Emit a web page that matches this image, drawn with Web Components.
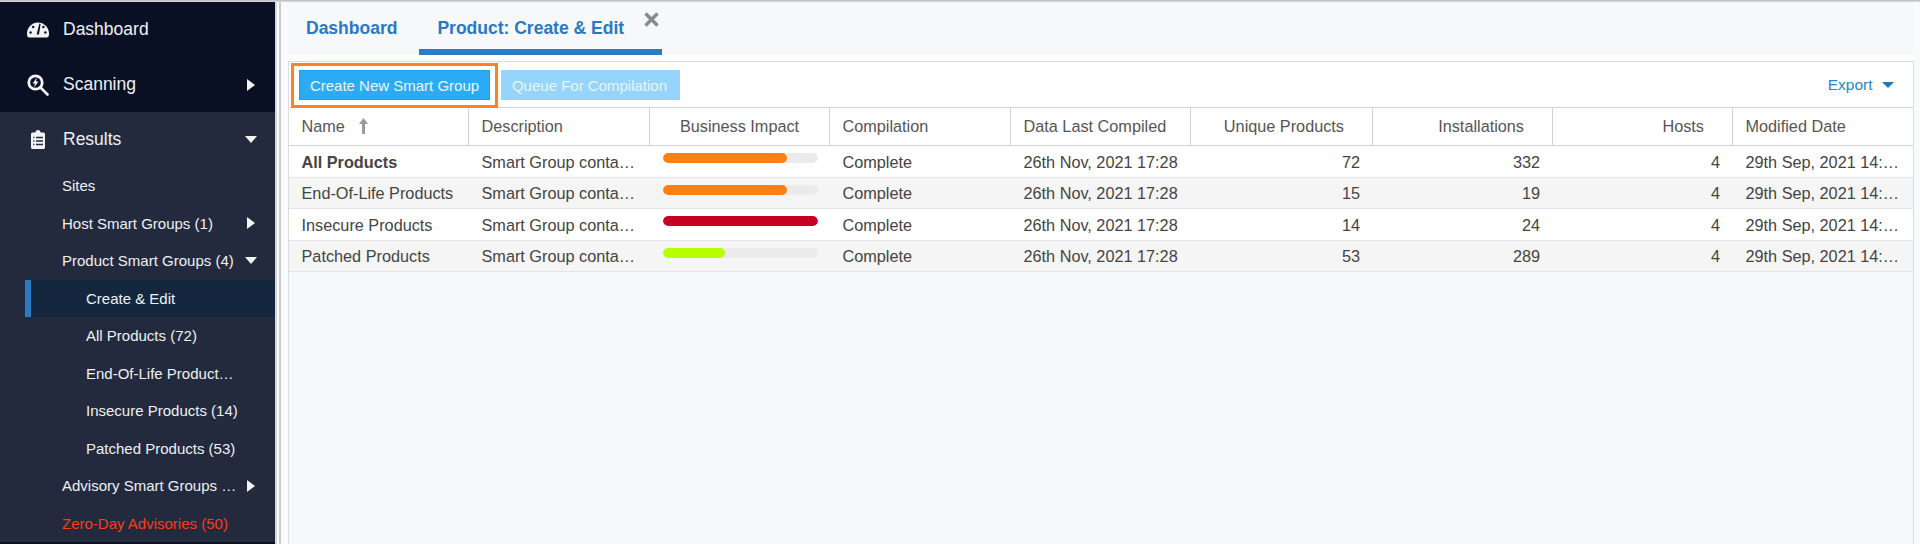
<!DOCTYPE html>
<html>
<head>
<meta charset="utf-8">
<title>Product: Create &amp; Edit</title>
<style>
  html, body { margin: 0; height: 100%; overflow: hidden; }
  body { font-family: "Liberation Sans", Arial, sans-serif; background: #f7f8fa; }
</style>
</head>
<body>
<x-app></x-app>
<script>
// Level 0: page shell
class XApp extends HTMLElement {
  constructor() {
    super();
    this.attachShadow({ mode: 'open' });
  }

  connectedCallback() {
    this.shadowRoot.innerHTML = `
      <style>
        :host { display: flex; flex-direction: column; height: 544px; }
        .edge { height: 2px; flex: none; background: linear-gradient(#b9bbbf, #dcdde0); }
        .body { flex: 1; display: flex; min-height: 0; }
        .gutter { flex: none; width: 6px; box-sizing: border-box; background: #fff;
                  border-left: 2px solid #d6d7da; border-right: 2px solid #c9cacd; }
        x-workspace { flex: 1; min-width: 0; }
      </style>
      <div class="edge"></div>
      <div class="body">
        <x-sidenav></x-sidenav>
        <div class="gutter"></div>
        <x-workspace></x-workspace>
      </div>
    `;
  }
}

// Sidebar
class XSidenav extends HTMLElement {
  constructor() {
    super();
    this.attachShadow({ mode: 'open' });
  }

  connectedCallback() {
    this.shadowRoot.innerHTML = `
      <style>
        :host { display: block; flex: none; width: 275px; background: #0a1024; }
        .results { background: #232a3e; }
        svg { display: block; }
      </style>
      <x-nav-item level="0">
        <svg slot="icon" width="22" height="17" viewBox="0 0 22 17">
          <path fill="#f2f3f5" d="M0 13A11 11.5 0 0 1 22 13Q22 16.5 19.5 16.5H2.5Q0 16.5 0 13Z"/>
          <circle cx="3.6" cy="11.5" r="1.2" fill="#0a1024"/>
          <circle cx="6.2" cy="6" r="1.2" fill="#0a1024"/>
          <circle cx="18.4" cy="11.5" r="1.2" fill="#0a1024"/>
          <circle cx="16.4" cy="6" r="1.2" fill="#0a1024"/>
          <path fill="#0a1024" d="M12.4 2.6L13.6 3L12 13.4H9.6Z"/>
        </svg>
        Dashboard
      </x-nav-item>
      <x-nav-item level="0" arrow="right">
        <svg slot="icon" width="22" height="22" viewBox="0 0 22 22">
          <circle cx="8.5" cy="8.5" r="6.7" fill="none" stroke="#f2f3f5" stroke-width="2.8"/>
          <path d="M13.5 13.5L20.5 20.5" stroke="#f2f3f5" stroke-width="2.6" stroke-linecap="round"/>
          <path fill="#f2f3f5" d="M10 3.5L5.5 9.6H8L7 13.5L11.5 7.4H9Z"/>
        </svg>
        Scanning
      </x-nav-item>
      <div class="results">
        <x-nav-item level="0" arrow="down">
          <svg slot="icon" width="22" height="19" viewBox="0 0 22 19">
            <path fill="#f2f3f5" d="M5.5 2.5H8.5A2.5 2.5 0 0 1 13.5 2.5H16.5Q18 2.5 18 4V17.5Q18 19 16.5 19H5.5Q4 19 4 17.5V4Q4 2.5 5.5 2.5Z"/>
            <path stroke="#232a3e" stroke-width="1.3" d="M6.2 7.5H7.4M9 7.5H16M6.2 11H7.4M9 11H16M6.2 14.5H7.4M9 14.5H16"/>
          </svg>
          Results
        </x-nav-item>
        <x-nav-item level="1">Sites</x-nav-item>
        <x-nav-item level="1" arrow="right">Host Smart Groups (1)</x-nav-item>
        <x-nav-item level="1" arrow="down">Product Smart Groups (4)</x-nav-item>
        <x-nav-item level="2" active>Create &amp; Edit</x-nav-item>
        <x-nav-item level="2">All Products (72)</x-nav-item>
        <x-nav-item level="2">End-Of-Life Product…</x-nav-item>
        <x-nav-item level="2">Insecure Products (14)</x-nav-item>
        <x-nav-item level="2">Patched Products (53)</x-nav-item>
        <x-nav-item level="1" arrow="right">Advisory Smart Groups …</x-nav-item>
        <x-nav-item level="1" alert>Zero-Day Advisories (50)</x-nav-item>
      </div>
    `;
  }
}

class XNavItem extends HTMLElement {
  constructor() {
    super();
    this.attachShadow({ mode: 'open' });
  }

  connectedCallback() {
    const arrow = this.getAttribute('arrow');
    this.shadowRoot.innerHTML = `
      <style>
        :host { display: flex; align-items: center; box-sizing: border-box; height: 37.5px;
                padding-right: 18px; color: #eef0f4; font-size: 15px; white-space: nowrap; }
        :host([level="0"]) { height: 55px; font-size: 17.5px; padding-left: 27px; }
        :host([level="1"]) { padding-left: 62px; }
        :host([level="2"]) { padding-left: 86px; }
        :host([active]) { margin-left: 25px; padding-left: 55px; border-left: 6px solid #2a7cc7; background: #14273f; }
        :host([alert]) { color: #ff3b14; }
        .icon { display: none; width: 36px; flex: none; }
        :host([level="0"]) .icon { display: block; }
        .arrow { width: 12px; margin-left: auto; flex: none; display: flex; justify-content: center; }
        .right { border-left: 8px solid #f2f3f5; border-top: 6px solid transparent; border-bottom: 6px solid transparent; }
        .down { border-top: 7px solid #f2f3f5; border-left: 6px solid transparent; border-right: 6px solid transparent; }
      </style>
      <div class="icon"><slot name="icon"></slot></div>
      <slot></slot>
      ${arrow ? `<div class="arrow"><div class="${arrow}"></div></div>` : ''}
    `;
  }
}

// Right side: tabs and the grid panel
class XWorkspace extends HTMLElement {
  constructor() {
    super();
    this.attachShadow({ mode: 'open' });
  }

  connectedCallback() {
    this.shadowRoot.innerHTML = `
      <style>
        :host { display: flex; flex-direction: column; background: #f9fafb; padding: 0 6px 0 7px; box-sizing: border-box; height: 100%; }
        x-tabs { flex: none; }
        .strip { height: 6px; flex: none; background: #fff; }
        x-grid-panel { flex: 1; min-height: 0; }
      </style>
      <x-tabs></x-tabs>
      <div class="strip"></div>
      <x-grid-panel></x-grid-panel>
    `;
  }
}

class XTabs extends HTMLElement {
  constructor() {
    super();
    this.attachShadow({ mode: 'open' });
  }

  connectedCallback() {
    this.shadowRoot.innerHTML = `
      <style>
        :host { display: flex; height: 53px; background: #f7f8fa; color: #2878c8; font-size: 17.5px; font-weight: bold; }
        .tab { box-sizing: border-box; display: flex; padding: 16px 19px 0 18px; white-space: nowrap; }
        .tab + .tab { margin-left: 3px; padding-left: 18px; padding-right: 3px; border-bottom: 6px solid #2a7cc7; }
        svg { margin: -6px 0 0 20px; }
      </style>
      <div class="tab">Dashboard</div>
      <div class="tab">Product: Create &amp; Edit
        <svg width="15" height="15" viewBox="0 0 15 15">
          <path d="M1.5 1.5L13.5 13.5M13.5 1.5L1.5 13.5" stroke="#8a8a8a" stroke-width="3.4"/>
        </svg>
      </div>
    `;
  }
}

class XGridPanel extends HTMLElement {
  constructor() {
    super();
    this.attachShadow({ mode: 'open' });
  }

  connectedCallback() {
    this.shadowRoot.innerHTML = `
      <style>
        :host { display: block; box-sizing: border-box; background: #f7f8fa; border: 1px solid #dcdcdc; border-bottom: 0;
                font-size: 15px; color: #444; }
        .toolbar { display: flex; align-items: flex-start; height: 45px; box-sizing: border-box; background: #fff; }
        .mark { box-sizing: border-box; height: 45px; margin: 1px 0 0 2px; padding: 4px 5px; border: 3px solid #ff8025; }
        button { display: block; box-sizing: border-box; height: 30px; border: 0; margin: 0; font: inherit; white-space: nowrap; color: #e9f6ff; }
        .create { width: 191px; background: #2cabf5; border: 1px solid #1f9fe8; }
        .queue { width: 179px; margin: 8px 0 0 3px; background: #97d4fb; color: #e6f5ff; padding-right: 8px; }
        .export { margin: 0 19px 0 auto; height: 45px; display: flex; align-items: center; color: #2a85c9; font-size: 15.5px; }
        .export i { margin: 1px 0 0 9.5px; border-top: 6px solid #1a76c0; border-left: 6px solid transparent; border-right: 6px solid transparent; }
      </style>
      <div class="toolbar">
        <div class="mark"><button class="create">Create New Smart Group</button></div>
        <button class="queue">Queue For Compilation</button>
        <div class="export">Export<i></i></div>
      </div>
      <x-product-grid></x-product-grid>
    `;
  }
}

const COLS = '180px 181px 180px 181px 180px 182px 180px 180px 1fr';
const RECENT = '26th Nov, 2021 17:28';
const MODIFIED = '29th Sep, 2021 14:…';
const RESULT = [
  ['All Products', 80, '#ff8010', 72, 332],
  ['End-Of-Life Products', 80, '#ff8010', 15, 19],
  ['Insecure Products', 100, '#c50022', 14, 24],
  ['Patched Products', 40, '#b8ff00', 53, 289],
];

class XProductGrid extends HTMLElement {
  constructor() {
    super();
    this.attachShadow({ mode: 'open' });
  }

  connectedCallback() {
    const rows = RESULT.map(([name, pct, color, uniq, inst], i) => `
      <div class="row">
        <div class="${i === 0 ? 'bold' : ''}">${name}</div>
        <div>Smart Group conta…</div>
        <div class="impact"><x-impact-bar value="${pct}" color="${color}"></x-impact-bar></div>
        <div>Complete</div>
        <div>${RECENT}</div>
        <div class="num">${uniq}</div>
        <div class="num">${inst}</div>
        <div class="num">4</div>
        <div>${MODIFIED}</div>
      </div>`).join('');
    this.shadowRoot.innerHTML = `
      <style>
        :host { display: block; font-size: 16.25px; }
        .head, .row { display: grid; grid-template-columns: ${COLS}; box-sizing: border-box; background: #fff; white-space: nowrap; }
        .head { height: 39px; border-top: 1px solid #d2d2d2; border-bottom: 1px solid #d2d2d2; color: #555; }
        .head > div { display: flex; align-items: center; padding: 0 12px 1px 12.5px; border-right: 1px solid #d2d2d2; box-sizing: border-box; }
        .head > div:last-child { border-right: 0; }
        .head .center { justify-content: center; padding-left: 0; padding-right: 0; }
        .head .num { justify-content: flex-end; padding-right: 28px; }
        .head svg { margin-left: 14px; }
        .row { height: 31.5px; border-bottom: 1px solid #e4e4e4; }
        .row:nth-child(even) { background: #f5f5f5; }
        .row > div { display: flex; align-items: center; padding: 2px 12px 0 12.5px; box-sizing: border-box; color: #444; }
        .row .num { justify-content: flex-end; padding-right: 13px; }
        .row .bold { font-weight: bold; }
        .row .impact { align-items: flex-start; padding: 7px 12px 0 13px; }
        x-impact-bar { flex: 1; }
      </style>
      <div class="head">
        <div>Name
          <svg width="9" height="16" viewBox="0 0 9 16">
            <path fill="#9a9a9a" d="M4.5 0L9 6H6V16H3V6H0Z"/>
          </svg>
        </div>
        <div>Description</div>
        <div class="center">Business Impact</div>
        <div>Compilation</div>
        <div>Data Last Compiled</div>
        <div class="num">Unique Products</div>
        <div class="num">Installations</div>
        <div class="num">Hosts</div>
        <div>Modified Date</div>
      </div>
      <div class="rows">${rows}</div>
    `;
  }
}

class XImpactBar extends HTMLElement {
  constructor() {
    super();
    this.attachShadow({ mode: 'open' });
  }

  connectedCallback() {
    this.shadowRoot.innerHTML = `
      <style>
        :host { display: block; height: 10px; border-radius: 5px; background: #ebebeb; overflow: hidden; }
        div { height: 100%; border-radius: 5px; width: ${this.getAttribute('value')}%; background: ${this.getAttribute('color')}; }
      </style>
      <div></div>
    `;
  }
}

// Register all components
customElements.define('x-app', XApp);
customElements.define('x-sidenav', XSidenav);
customElements.define('x-nav-item', XNavItem);
customElements.define('x-workspace', XWorkspace);
customElements.define('x-tabs', XTabs);
customElements.define('x-grid-panel', XGridPanel);
customElements.define('x-product-grid', XProductGrid);
customElements.define('x-impact-bar', XImpactBar);
</script>
</body>
</html>
